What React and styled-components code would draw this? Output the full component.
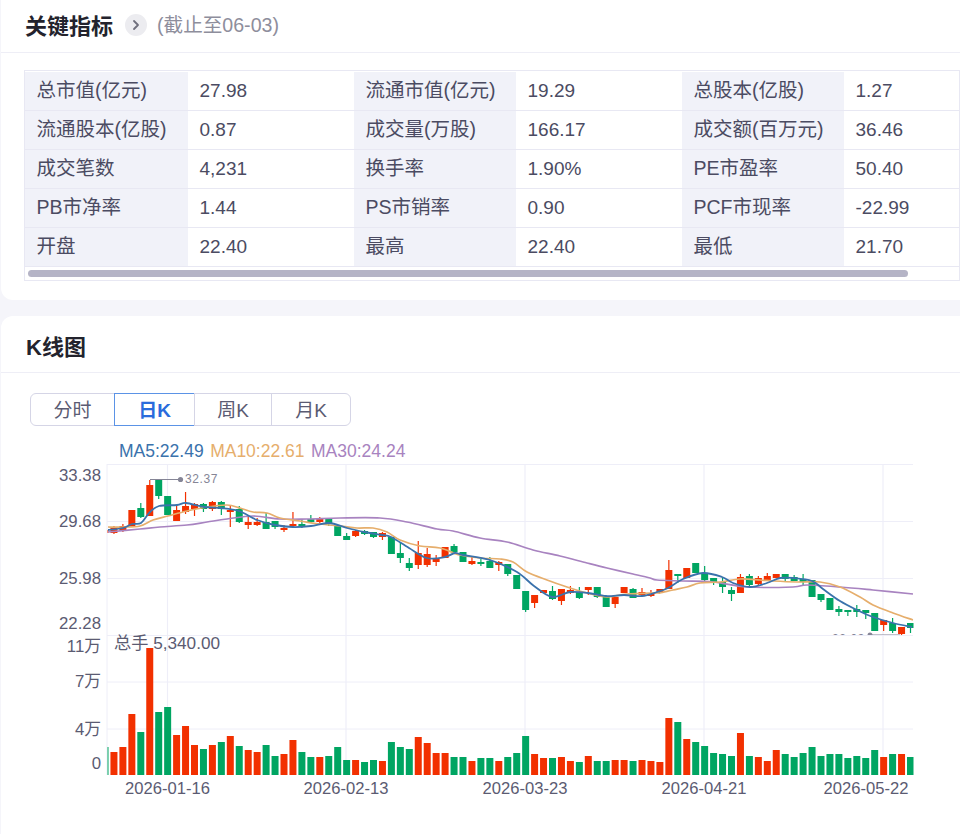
import styled, { createGlobalStyle } from "styled-components";

const GlobalStyle = createGlobalStyle`
  html, body {
    margin: 0;
    background: #f5f5fa;
  }
  body {
    font-family: "Liberation Sans", "Noto Sans CJK SC", sans-serif;
    overflow: hidden;
  }
`;

const RED = "#f23000";
const GREEN = "#00a562";
const GRID = "#eeeef8";
const AXIS = "#5b5b72";

const metrics = [
  ["总市值(亿元)", "27.98", "流通市值(亿元)", "19.29", "总股本(亿股)", "1.27"],
  ["流通股本(亿股)", "0.87", "成交量(万股)", "166.17", "成交额(百万元)", "36.46"],
  ["成交笔数", "4,231", "换手率", "1.90%", "PE市盈率", "50.40"],
  ["PB市净率", "1.44", "PS市销率", "0.90", "PCF市现率", "-22.99"],
  ["开盘", "22.40", "最高", "22.40", "最低", "21.70"],
];

const tabs = ["分时", "日K", "周K", "月K"];

// volume bars: [isRed, top y], baseline is y=775
const volumes = [
  [0, 747], [1, 752], [1, 747], [1, 714], [0, 732], [1, 648], [0, 712], [0, 707], [1, 735], [1, 726],
  [1, 745], [0, 749], [1, 745], [0, 742], [1, 736], [0, 746], [1, 750], [1, 752], [0, 745], [0, 756],
  [1, 754], [1, 740], [0, 752], [0, 757], [1, 757], [0, 756], [0, 747], [0, 760], [1, 760], [0, 762],
  [0, 760], [1, 761], [0, 742], [0, 747], [0, 749], [1, 737], [1, 743], [1, 753], [1, 753], [0, 757],
  [0, 757], [1, 761], [0, 758], [0, 758], [1, 761], [0, 757], [0, 753], [0, 736], [1, 754], [1, 758],
  [0, 758], [1, 757], [1, 761], [0, 762], [1, 756], [0, 761], [0, 761], [1, 760], [1, 760], [0, 761],
  [1, 760], [1, 761], [1, 762], [1, 718], [0, 722], [1, 739], [0, 742], [0, 746], [0, 753], [0, 754],
  [0, 756], [1, 733], [0, 756], [1, 757], [1, 761], [1, 750], [0, 754], [0, 757], [0, 753], [0, 747],
  [0, 756], [0, 754], [0, 754], [0, 758], [0, 756], [0, 758], [0, 750], [1, 757], [0, 754], [1, 754],
  [0, 757],
];

// candles: [isRed, body top, body bottom, high, low]
const candles = [
  [1, 530, 533, 528, 534], [1, 527, 533, 526, 534], [1, 526, 531, 524, 532], [1, 510, 527, 510, 527], [0, 508, 517, 503, 518],
  [1, 485, 516, 480, 516], [0, 480, 496, 480, 499], [0, 496, 515, 496, 515], [1, 510, 521, 506, 521], [1, 506, 512, 492, 514],
  [1, 504, 509, 503, 516], [0, 504, 509, 503, 512], [1, 502, 509, 501, 511], [0, 502, 509, 501, 515], [1, 510, 512, 505, 527],
  [0, 509, 522, 506, 523], [1, 522, 525, 515, 529], [1, 522, 525, 518, 526], [0, 522, 529, 513, 529], [0, 521, 527, 521, 529],
  [1, 528, 530, 525, 532], [1, 524, 526, 512, 528], [0, 524, 527, 519, 528], [0, 519, 522, 515, 523], [1, 519, 522, 517, 523],
  [0, 519, 524, 519, 526], [0, 526, 536, 526, 536], [0, 536, 540, 533, 540], [1, 531, 536, 530, 537], [0, 531, 534, 530, 535],
  [0, 532, 537, 532, 538], [1, 533, 537, 532, 540], [0, 537, 554, 537, 554], [0, 553, 558, 543, 563], [0, 563, 568, 558, 571],
  [1, 553, 565, 541, 569], [1, 554, 565, 548, 567], [1, 559, 562, 555, 566], [1, 547, 558, 547, 558], [0, 546, 552, 544, 552],
  [0, 552, 562, 552, 562], [1, 561, 564, 557, 565], [0, 562, 564, 559, 566], [0, 561, 568, 557, 568], [1, 562, 565, 561, 571],
  [0, 564, 574, 564, 576], [0, 575, 589, 575, 589], [0, 591, 610, 591, 612], [1, 595, 603, 595, 608], [1, 590, 593, 590, 593],
  [0, 591, 599, 586, 600], [1, 589, 601, 589, 605], [1, 590, 593, 586, 594], [0, 592, 598, 587, 599], [1, 587, 590, 587, 595],
  [0, 587, 597, 587, 598], [0, 597, 607, 597, 607], [1, 597, 604, 597, 608], [1, 587, 593, 587, 593], [0, 589, 598, 588, 598],
  [1, 592, 595, 588, 596], [1, 593, 596, 590, 597], [1, 589, 593, 589, 593], [1, 570, 589, 560, 589], [0, 574, 576, 574, 583],
  [1, 568, 578, 568, 578], [0, 563, 573, 563, 573], [0, 573, 580, 566, 583], [0, 578, 582, 578, 585], [0, 582, 587, 578, 593],
  [0, 590, 594, 587, 601], [1, 577, 593, 574, 593], [0, 576, 585, 574, 587], [1, 578, 584, 576, 585], [1, 576, 580, 573, 581],
  [1, 574, 578, 574, 578], [0, 574, 579, 574, 581], [0, 577, 581, 575, 581], [0, 579, 582, 574, 585], [0, 580, 597, 580, 597],
  [0, 594, 600, 594, 602], [0, 598, 610, 598, 610], [0, 609, 612, 606, 616], [0, 610, 612, 610, 616], [0, 609, 612, 605, 617],
  [0, 610, 613, 610, 619], [0, 613, 631, 613, 631], [1, 620, 625, 620, 631], [0, 623, 631, 618, 633], [1, 627, 634, 627, 635],
  [0, 623, 628, 623, 633],
];

const ma5 = [
  [108, 530], [123, 528], [132, 524], [141, 523], [150, 512], [159, 506], [177, 505], [186, 503], [204, 507], [221, 508],
  [239, 511], [257, 520], [275, 525], [293, 527], [311, 526], [329, 523], [347, 528], [364, 532], [382, 535], [391, 537],
  [409, 548], [427, 558], [445, 557], [455, 553], [463, 555], [490, 560], [517, 572], [534, 586], [552, 597], [570, 592],
  [588, 593], [606, 596], [624, 595], [642, 596], [657, 592], [668, 588], [683, 579], [703, 573], [722, 577], [733, 583],
  [750, 587], [767, 583], [780, 578], [793, 578], [812, 581], [823, 589], [840, 601], [857, 610], [873, 617], [893, 623], [912, 627],
];

const ma10 = [
  [108, 527], [123, 527], [140, 526], [153, 520], [168, 516], [187, 511], [207, 507], [227, 505], [240, 508], [253, 512],
  [267, 513], [280, 518], [300, 521], [320, 524], [340, 526], [357, 528], [373, 528], [387, 532], [400, 540], [420, 546],
  [440, 548], [460, 555], [480, 558], [500, 559], [513, 562], [527, 572], [547, 580], [567, 587], [587, 593], [607, 597],
  [627, 594], [657, 593], [660, 593], [673, 590], [687, 587], [700, 583], [720, 582], [740, 579], [760, 580], [773, 581],
  [797, 582], [820, 582], [840, 587], [860, 597], [873, 605], [893, 613], [913, 620],
];

const ma30 = [
  [108, 532], [140, 529], [160, 527], [187, 525], [207, 522], [227, 519], [253, 516], [280, 519], [307, 519], [340, 518],
  [380, 518], [407, 522], [437, 529], [453, 531], [480, 538], [507, 542], [533, 550], [560, 556], [587, 563], [607, 568],
  [633, 574], [650, 578], [657, 580], [683, 581], [713, 582], [747, 587], [793, 587], [807, 585], [840, 587], [873, 590], [913, 594],
];

const barX = (i) => 105 + i * 8.95;

// catmull-rom through the points, gives the smooth echarts look
const smoothPath = (pts) => {
  let d = `M${pts[0][0]} ${pts[0][1]}`;
  for (let i = 0; i < pts.length - 1; i++) {
    const p0 = pts[i - 1] || pts[i];
    const p1 = pts[i];
    const p2 = pts[i + 1];
    const p3 = pts[i + 2] || p2;
    const c1x = p1[0] + (p2[0] - p0[0]) / 6;
    const c1y = p1[1] + (p2[1] - p0[1]) / 6;
    const c2x = p2[0] - (p3[0] - p1[0]) / 6;
    const c2y = p2[1] - (p3[1] - p1[1]) / 6;
    d += ` C${c1x} ${c1y} ${c2x} ${c2y} ${p2[0]} ${p2[1]}`;
  }
  return d;
};

function KLineChart() {
  return (
    <ChartSvg viewBox="0 460 960 340" width="960" height="340">
      <defs>
        <clipPath id="candle-area">
          <rect x="107.5" y="464" width="806" height="171" />
        </clipPath>
        <clipPath id="volume-area">
          <rect x="107.5" y="635" width="806" height="141" />
        </clipPath>
      </defs>

      {[464.5, 521.5, 578.5, 635.5, 682, 729].map((y) => (
        <line key={y} x1="107" x2="913" y1={y} y2={y} stroke={GRID} />
      ))}
      {[107, 167.5, 346, 525, 704, 883].map((x) => (
        <line key={x} x1={x} x2={x} y1="464" y2="775" stroke={GRID} strokeWidth={x === 107 ? 1 : 1.2} />
      ))}

      <g fill={AXIS} fontSize="16.8" textAnchor="end">
        <text x="101" y="481">33.38</text>
        <text x="101" y="527">29.68</text>
        <text x="101" y="584">25.98</text>
        <text x="101" y="629">22.28</text>
        <text x="101" y="652">11万</text>
        <text x="101" y="687">7万</text>
        <text x="101" y="735">4万</text>
        <text x="101" y="769">0</text>
      </g>
      <g fill={AXIS} fontSize="16.6" textAnchor="middle">
        <text x="167.5" y="794">2026-01-16</text>
        <text x="346" y="794">2026-02-13</text>
        <text x="525" y="794">2026-03-23</text>
        <text x="704" y="794">2026-04-21</text>
        <text x="866" y="794">2026-05-22</text>
      </g>

      <g clipPath="url(#candle-area)">
        {candles.map(([up, top, bottom, high, low], i) => {
          const x = barX(i);
          const color = up ? RED : GREEN;
          return (
            <g key={i} fill={color}>
              <rect x={x - 0.6} y={high} width="1.2" height={low - high} />
              <rect x={x - 3.5} y={top} width="7" height={bottom - top} />
            </g>
          );
        })}
        <path d={smoothPath(ma30)} fill="none" stroke="#a883c0" strokeWidth="1.7" />
        <path d={smoothPath(ma10)} fill="none" stroke="#e6ae6c" strokeWidth="1.7" />
        <path d={smoothPath(ma5)} fill="none" stroke="#3a72ac" strokeWidth="1.8" />
        <text x="832" y="643" fontSize="12" letterSpacing="0.6" fill="#858596">22.03</text>
        <line x1="870" x2="900" y1="635" y2="635" stroke="#858596" />
        <circle cx="870" cy="635" r="2.5" fill="#858596" />
      </g>

      <line x1="150" x2="180" y1="479.5" y2="479.5" stroke="#858596" />
      <circle cx="180.5" cy="479.5" r="2.6" fill="#858596" />
      <text x="185" y="483" fontSize="12" letterSpacing="0.6" fill="#858596">32.37</text>

      <g clipPath="url(#volume-area)">
        {volumes.map(([up, top], i) => (
          <rect key={i} x={barX(i) - 3.5} y={top} width="7" height={775 - top} fill={up ? RED : GREEN} />
        ))}
      </g>
      <text x="114" y="649" fontSize="17.2" fill={AXIS}>总手 5,340.00</text>
    </ChartSvg>
  );
}

export default function App() {
  return (
    <>
      <GlobalStyle />
      <Page>
        <MetricsCard>
          <CardHeader>
            <CardTitle>关键指标</CardTitle>
            <MoreButton aria-label="更多">
              <svg width="10" height="12" viewBox="0 0 10 12" fill="none">
                <path d="M3 2l4 4-4 4" stroke="#6e6e7c" strokeWidth="1.8" strokeLinecap="round" strokeLinejoin="round" />
              </svg>
            </MoreButton>
            <AsOf>(截止至06-03)</AsOf>
          </CardHeader>
          <TableWrap>
            <MetricsGrid>
              {metrics.flat().map((text, i) => (
                <Cell key={i} $label={i % 2 === 0}>{text}</Cell>
              ))}
            </MetricsGrid>
            <ScrollTrack>
              <ScrollThumb />
            </ScrollTrack>
          </TableWrap>
        </MetricsCard>

        <ChartCard>
          <CardHeader $compact>
            <CardTitle>K线图</CardTitle>
          </CardHeader>
          <TabGroup>
            {tabs.map((tab) => (
              <Tab key={tab} $active={tab === "日K"}>{tab}</Tab>
            ))}
          </TabGroup>
          <Legend>
            <LegendItem $color="#3a72ac">MA5:22.49</LegendItem>
            <LegendItem $color="#e6ae6c">MA10:22.61</LegendItem>
            <LegendItem $color="#a883c0">MA30:24.24</LegendItem>
          </Legend>
          <KLineChart />
        </ChartCard>
      </Page>
    </>
  );
}

const Page = styled.div`
  width: 960px;
  height: 834px;
  overflow: hidden;
  display: flex;
  flex-direction: column;
  gap: 16px;
`;

const Card = styled.section`
  background: #fff;
  margin-left: 1px;
`;

const MetricsCard = styled(Card)`
  height: 300px;
  flex: none;
  border-radius: 0 0 0 12px;
`;

const ChartCard = styled(Card)`
  flex: 1;
  border-radius: 12px 0 0 0;
`;

const CardHeader = styled.header`
  box-sizing: border-box;
  height: ${(p) => (p.$compact ? "57px" : "53px")};
  border-bottom: 1px solid #eeeef6;
  display: flex;
  align-items: center;
  padding: ${(p) => (p.$compact ? "3px 0 0 25px" : "0 0 2px 24px")};
`;

const CardTitle = styled.h2`
  margin: 0;
  padding-top: 4px;
  font-size: 22px;
  line-height: 1;
  font-weight: 700;
  color: #23232d;
`;

const MoreButton = styled.span`
  width: 22px;
  height: 22px;
  border-radius: 50%;
  background: #ececf0;
  margin-left: 12px;
  display: flex;
  align-items: center;
  justify-content: center;
`;

const AsOf = styled.span`
  margin-left: 10px;
  padding-top: 2px;
  font-size: 19.6px;
  line-height: 1;
  color: #8e8e9c;
`;

const TableWrap = styled.div`
  margin: 17px 0 0 23px;
  height: 208px;
  padding-top: 1px;
  border: 1px solid #e8e8f3;
  width: 934px;
`;

const MetricsGrid = styled.div`
  display: grid;
  grid-template-columns: 163px 166px 162px 166px 162px 115px;
  grid-auto-rows: 39px;
`;

const Cell = styled.div`
  display: flex;
  align-items: center;
  padding: ${(p) => (p.$label ? "0 0 0 11.5px" : "0 0 2px 11.5px")};
  font-size: ${(p) => (p.$label ? "19.5px" : "19px")};
  line-height: 1;
  white-space: nowrap;
  color: #4b4b62;
  background: ${(p) => (p.$label ? "#f1f2f9" : "#fff")};
  border-bottom: 1px solid #e8e8f3;
`;

const ScrollTrack = styled.div`
  padding: 3px 0 0 3px;
`;

const ScrollThumb = styled.div`
  width: 880px;
  height: 7px;
  border-radius: 4px;
  background: #b5b4c6;
`;

const TabGroup = styled.div`
  display: grid;
  grid-template-columns: 85px 80px 77px 79px;
  width: 321px;
  height: 33px;
  margin: 20px 0 0 29px;
`;

const Tab = styled.div`
  display: flex;
  align-items: center;
  justify-content: center;
  padding-top: 2px;
  font-size: 19px;
  line-height: 1;
  font-weight: ${(p) => (p.$active ? 700 : 400)};
  color: ${(p) => (p.$active ? "#2a6bdc" : "#5b5b72")};
  border: 1px solid ${(p) => (p.$active ? "#5b93e6" : "#d5d5e6")};
  margin-left: -1px;
  &:first-child {
    margin-left: 0;
    border-radius: 6px 0 0 6px;
  }
  &:last-child {
    border-radius: 0 6px 6px 0;
  }
`;

const Legend = styled.div`
  display: flex;
  gap: 6.5px;
  height: 19px;
  box-sizing: border-box;
  padding-top: 3px;
  margin: 15px 0 0 118px;
  align-items: center;
`;

const LegendItem = styled.span`
  font-size: 17.5px;
  line-height: 1;
  color: ${(p) => p.$color};
`;

const ChartSvg = styled.svg`
  display: block;
  margin-left: -1px;
  font-family: "Liberation Sans", "Noto Sans CJK SC", sans-serif;
`;
